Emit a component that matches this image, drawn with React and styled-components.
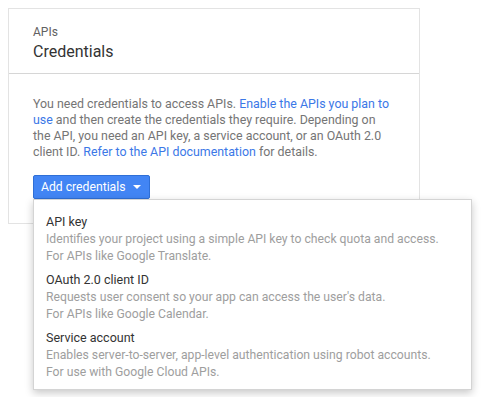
import React from "react";
import styled, { createGlobalStyle } from "styled-components";

const Global = createGlobalStyle`
  body {
    margin: 8px;
    background: #ffffff;
    font-family: Roboto, "Liberation Sans", Arial, sans-serif;
  }
  #root {
    min-height: 389px;
  }
`;

const Card = styled.div`
  width: 410px;
  border: 1px solid #e3e3e3;
  background: #fff;
`;

const Header = styled.div`
  padding: 16px 24px 10px;
  border-bottom: 1px solid #d6d6d6;
`;

const Crumb = styled.div`
  font-size: 12px;
  line-height: 15px;
  color: #616161;
`;

const Title = styled.h1`
  margin: 1px 0 0;
  font-size: 16px;
  line-height: 22px;
  font-weight: 400;
  color: #333;
`;

const Body = styled.div`
  padding: 22px 24px 24px;
`;

const Text = styled.p`
  margin: 0 0 15px;
  font-size: 12.4px;
  line-height: 16px;
  color: #757575;
  a {
    color: #3b78e7;
    text-decoration: none;
  }
`;

const Wrap = styled.div`
  position: relative;
  display: inline-block;
  vertical-align: top;
`;

const Button = styled.button`
  display: flex;
  align-items: center;
  gap: 8px;
  box-sizing: border-box;
  height: 24px;
  padding: 0 8px 0 7px;
  background: #4285f4;
  border: 1px solid #2f6fd6;
  border-radius: 2px;
  color: #fff;
  font-family: Roboto, "Liberation Sans", Arial, sans-serif;
  font-size: 12.2px;
  cursor: pointer;
`;

const Caret = styled.span`
  width: 0;
  height: 0;
  border-left: 4px solid transparent;
  border-right: 4px solid transparent;
  border-top: 4px solid #fff;
`;

const Menu = styled.div`
  position: absolute;
  top: 24px;
  left: 0;
  width: 439px;
  box-sizing: border-box;
  padding: 10px 0 5px;
  background: #fff;
  border: 1px solid #d4d4d4;
  box-shadow: 0 3px 8px rgba(0, 0, 0, 0.22);
`;

const Item = styled.div`
  padding: 3px 12px 4px;
`;

const ItemTitle = styled.div`
  font-size: 12.5px;
  line-height: 18px;
  color: #333;
`;

const ItemDesc = styled.div`
  font-size: 12.2px;
  line-height: 16.5px;
  color: #9e9e9e;
`;

const items = [
  {
    title: "API key",
    desc: ["Identifies your project using a simple API key to check quota and access.", "For APIs like Google Translate."],
  },
  {
    title: "OAuth 2.0 client ID",
    desc: ["Requests user consent so your app can access the user's data.", "For APIs like Google Calendar."],
  },
  {
    title: "Service account",
    desc: ["Enables server-to-server, app-level authentication using robot accounts.", "For use with Google Cloud APIs."],
  },
];

export default function App() {
  return (
    <>
      <Global />
      <Card>
        <Header>
          <Crumb>APIs</Crumb>
          <Title>Credentials</Title>
        </Header>
        <Body>
          <Text>
            You need credentials to access APIs. <a href="#">Enable the APIs you plan to use</a> and then create the
            credentials they require. Depending on the API, you need an API key, a service account, or an OAuth 2.0
            client ID. <a href="#">Refer to the API documentation</a> for details.
          </Text>
          <Wrap>
            <Button>
              Add credentials <Caret />
            </Button>
            <Menu>
              {items.map((it) => (
                <Item key={it.title}>
                  <ItemTitle>{it.title}</ItemTitle>
                  {it.desc.map((d) => (
                    <ItemDesc key={d}>{d}</ItemDesc>
                  ))}
                </Item>
              ))}
            </Menu>
          </Wrap>
        </Body>
      </Card>
    </>
  );
}
